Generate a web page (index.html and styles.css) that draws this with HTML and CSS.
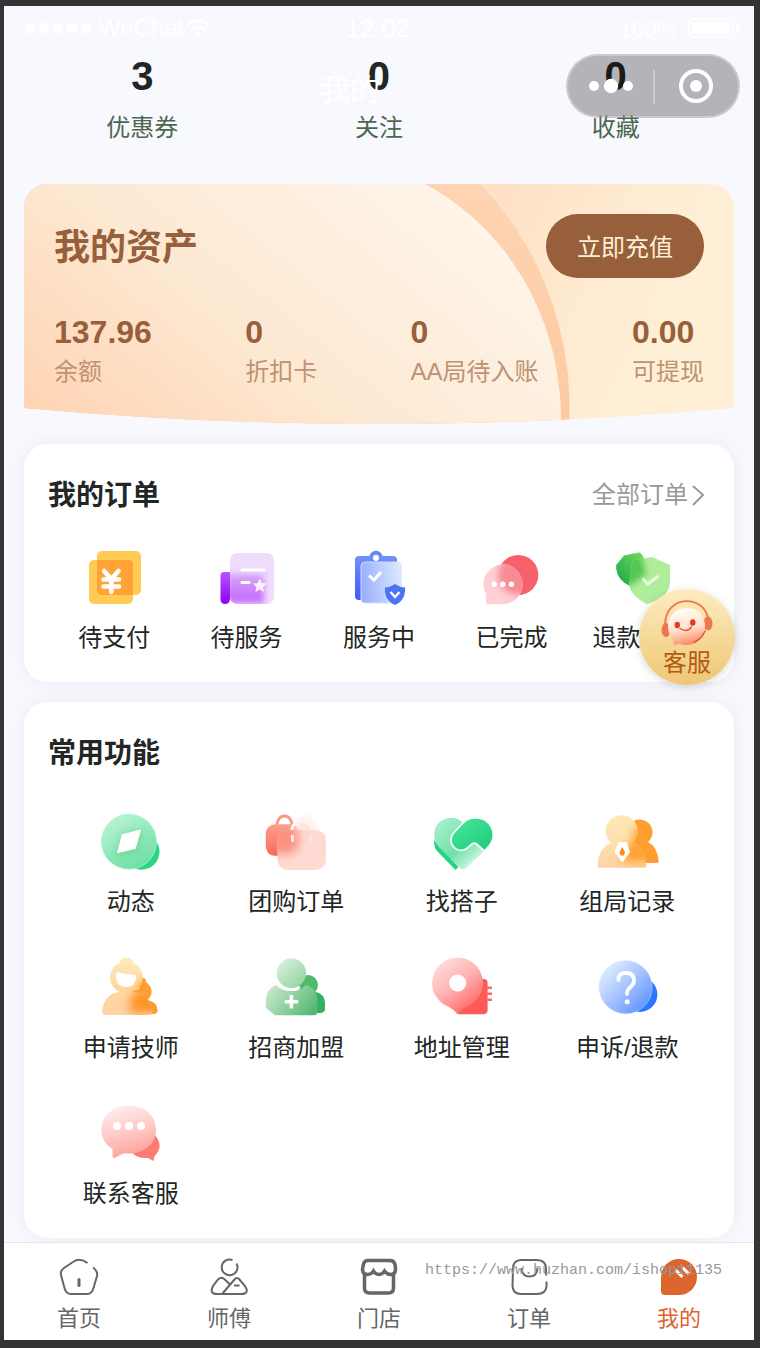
FILE: index.html
```html
<!DOCTYPE html>
<html lang="zh-CN">
<head>
    <meta charset="UTF-8">
    <meta name="viewport" content="width=device-width, initial-scale=1.0">
    <title>我的</title>
    <link rel="stylesheet" href="styles.css">
</head>
<body>

<div class="screen">

    <header class="topbar">
        <div class="status">
            <div class="status-left">
                <svg width="68" height="12" viewBox="0 0 68 12" fill="#fff"><circle cx="6" cy="6" r="5.6"/><circle cx="20" cy="6" r="5.6"/><circle cx="34" cy="6" r="5.6"/><circle cx="48" cy="6" r="5.6"/><circle cx="62" cy="6" r="5.6"/></svg>
                <span class="carrier">WeChat</span>
                <svg width="24" height="18" viewBox="0 0 24 18" fill="none" stroke="#fff" stroke-width="3"><path d="M1 6.5Q12-3 23 6.5M5 11Q12 5 19 11"/><path d="M8.5 14Q12 11 15.5 14L12 17.5Z" fill="#fff" stroke="none"/></svg>
            </div>
            <span class="time">12:02</span>
            <div class="status-right">
                <span class="percent">100%</span>
                <svg width="52" height="20" viewBox="0 0 52 20"><rect x="1" y="1" width="44" height="18" rx="4" fill="none" stroke="#fff" stroke-width="2"/><rect x="4" y="4" width="38" height="12" rx="2" fill="#fff"/><path d="M48 6Q52 6 52 10T48 14Z" fill="#fff"/></svg>
            </div>
        </div>
        <div class="nav">
            <h1 class="nav-title">我的</h1>
            <div class="capsule">
                <button type="button" aria-label="更多"><svg width="44" height="16" viewBox="0 0 44 16" fill="#fff"><circle cx="5" cy="8" r="5"/><circle cx="22" cy="8" r="7.2"/><circle cx="39" cy="8" r="5"/></svg></button>
                <button type="button" aria-label="关闭"><svg width="34" height="34" viewBox="0 0 34 34"><circle cx="17" cy="17" r="15" fill="none" stroke="#fff" stroke-width="4"/><circle cx="17" cy="17" r="6" fill="#fff"/></svg></button>
            </div>
        </div>
    </header>

    <main class="content">
        <div class="stats">
            <a href="#"><b>3</b><span>优惠券</span></a>
            <a href="#"><b>0</b><span>关注</span></a>
            <a href="#"><b>0</b><span>收藏</span></a>
        </div>

        <section class="assets">
            <svg class="assets-bg" viewBox="0 0 710 240" preserveAspectRatio="none">
                <defs>
                    <clipPath id="card"><path d="M0 24A24 24 0 0 1 24 0H686A24 24 0 0 1 710 24V224Q355 256 0 224Z"/></clipPath>
                    <linearGradient id="base" x1="0.68" y1="0" x2="1" y2="0.05"><stop offset="0" stop-color="#fee1c6"/><stop offset="0.5" stop-color="#feead0"/><stop offset="1" stop-color="#feefd6"/></linearGradient>
                    <linearGradient id="band" x1="0" y1="0" x2="0" y2="1"><stop offset="0" stop-color="#fed4b2"/><stop offset="1" stop-color="#fdcaa1"/></linearGradient>
                    <linearGradient id="disc" gradientUnits="userSpaceOnUse" x1="0" y1="240" x2="290" y2="-110"><stop offset="0" stop-color="#ffd2b2"/><stop offset="0.45" stop-color="#fde8d1"/><stop offset="1" stop-color="#fef5ea"/></linearGradient>
                </defs>
                <g clip-path="url(#card)">
                    <rect width="710" height="240" fill="url(#base)"/>
                    <path d="M0 0H456C515 60 550 150 545 240H0Z" fill="url(#band)"/>
                    <path d="M0 0H401C480 42 538 130 537 240H0Z" fill="url(#disc)"/>
                </g>
            </svg>
            <div class="assets-head">
                <h2>我的资产</h2>
                <button type="button" class="recharge">立即充值</button>
            </div>
            <div class="assets-list">
                <div><b>137.96</b><span>余额</span></div>
                <div><b>0</b><span>折扣卡</span></div>
                <div><b>0</b><span>AA局待入账</span></div>
                <div><b>0.00</b><span>可提现</span></div>
            </div>
        </section>

        <section class="panel">
            <div class="panel-head">
                <h2>我的订单</h2>
                <a class="more" href="#">全部订单<svg width="18" height="24" viewBox="0 0 18 24" fill="none" stroke="#999" stroke-width="2"><path d="M5 3L15 12L5 22"/></svg></a>
            </div>
            <div class="orders">
                <a class="entry" href="#">
                    <svg viewBox="0 0 60 60">
                        <rect x="5" y="12" width="44" height="44" rx="5" fill="#ffcb54"/>
                        <rect x="13" y="3" width="44" height="44" rx="5" fill="#ffcb54"/>
                        <path d="M13 12H44Q49 12 49 17V47H18Q13 47 13 42Z" fill="#ffa336"/>
                        <path d="M20 23L27.3 31L34.5 23M19.5 31.5H35M19.5 38.5H35M27.3 31V44" fill="none" stroke="#fff" stroke-width="4.6" stroke-linecap="round"/>
                    </svg>
                    <span>待支付</span>
                </a>
                <a class="entry" href="#">
                    <svg viewBox="0 0 60 60">
                        <defs>
                            <linearGradient id="o2a" x1="0" y1="0" x2="0" y2="1"><stop offset="0" stop-color="#b955ff"/><stop offset="1" stop-color="#8d00f5"/></linearGradient>
                            <linearGradient id="o2b" x1="0" y1="0" x2="0" y2="1"><stop offset="0" stop-color="#d9a5fc"/><stop offset="1" stop-color="#c065fb"/></linearGradient>
                            <clipPath id="o2c"><rect x="13" y="5" width="44" height="51" rx="7"/></clipPath>
                            <filter id="soft" x="-50%" y="-50%" width="200%" height="200%"><feGaussianBlur stdDeviation="3"/></filter>
                        </defs>
                        <path d="M13 24H7Q3.5 24 3.5 28V51Q3.5 56 8 56T13 51Z" fill="url(#o2a)"/>
                        <g clip-path="url(#o2c)">
                            <rect x="13" y="5" width="44" height="51" fill="#efdcfd"/>
                            <rect x="10" y="26" width="37" height="29" fill="url(#o2b)" filter="url(#soft)"/>
                        </g>
                        <path d="M25 22H47M25 34.5H32" stroke="#fff" stroke-width="3.2" stroke-linecap="round"/>
                        <path d="M42.7 30.5L44.8 35L49.5 35.6L46 39L47 44L42.7 41.5L38.4 44L39.3 39L36 35.6L40.7 35Z" fill="#fcf2ff"/>
                    </svg>
                    <span>待服务</span>
                </a>
                <a class="entry" href="#">
                    <svg viewBox="0 0 60 60">
                        <defs>
                            <linearGradient id="o3a" x1="0" y1="0" x2="0" y2="1"><stop offset="0" stop-color="#7191fb"/><stop offset="1" stop-color="#4655fc"/></linearGradient>
                            <linearGradient id="o3b" x1="0" y1="0.6" x2="1" y2="0.5"><stop offset="0" stop-color="#97aefe"/><stop offset="1" stop-color="#dce8ff"/></linearGradient>
                        </defs>
                        <circle cx="27" cy="9.5" r="4.7" fill="none" stroke="#6c87f3" stroke-width="4"/>
                        <rect x="6" y="8" width="42" height="44" rx="4" fill="url(#o3a)"/>
                        <circle cx="27" cy="10" r="3" fill="#fff"/>
                        <rect x="12" y="14" width="40" height="41" rx="4" fill="url(#o3b)" stroke="#d2dfff"/>
                        <path d="M20 27.5L25 32L32 24" fill="none" stroke="#fff" stroke-width="3"/>
                        <path d="M46 36Q51 39.5 56 39.5Q57 52 46 57Q35 52 36 39.5Q41 39.5 46 36Z" fill="#4c73f0"/>
                        <path d="M41.5 44L46 49L50.5 44" fill="none" stroke="#fff" stroke-width="2.4"/>
                    </svg>
                    <span>服务中</span>
                </a>
                <a class="entry" href="#">
                    <svg viewBox="0 0 60 60">
                        <defs><clipPath id="o4"><path d="M21.6 16.3A20 20 0 0 1 21.6 56.3H8Q5 56.3 5 53V46A20 20 0 0 1 21.6 16.3Z"/></clipPath></defs>
                        <circle cx="37.3" cy="27" r="20" fill="#f7616c"/>
                        <g clip-path="url(#o4)">
                            <rect width="60" height="60" fill="#fecfd5"/>
                            <circle cx="37" cy="27" r="20" fill="#f98b96" filter="url(#soft)"/>
                        </g>
                        <g fill="#fff"><circle cx="13.2" cy="36.3" r="2.7"/><circle cx="21.8" cy="36.3" r="2.7"/><circle cx="30.4" cy="36.3" r="2.7"/></g>
                    </svg>
                    <span>已完成</span>
                </a>
                <a class="entry" href="#">
                    <svg viewBox="0 0 60 60">
                        <defs>
                            <linearGradient id="o5a" x1="1" y1="0" x2="0" y2="1"><stop offset="0" stop-color="#78df57"/><stop offset="1" stop-color="#15a44c"/></linearGradient>
                            <clipPath id="o5"><path d="M18.5 12.5L37.8 9L56 17V34Q56 49 32.8 56.3Q13 45 15.5 33Z"/></clipPath>
                        </defs>
                        <path d="M2.2 17L10 7.5L24.5 4.5Q27 4 29.5 9.5L32 30L16 38Q4 33 2.2 21Z" fill="url(#o5a)"/>
                        <g clip-path="url(#o5)">
                            <rect width="60" height="60" fill="#b0ed9b"/>
                            <path d="M8 5H27L32 26L16 38L6 33Z" fill="#54c651" filter="url(#soft)"/>
                        </g>
                        <path d="M29 30.5L33.7 36L44.5 28" fill="none" stroke="#e7fbdc" stroke-width="3"/>
                    </svg>
                    <span>退款/售后</span>
                </a>
            </div>
        </section>

        <section class="panel">
            <div class="panel-head">
                <h2>常用功能</h2>
            </div>
            <div class="tools">
                <a class="entry" href="#">
                    <svg viewBox="0 0 64 64">
                        <defs>
                            <linearGradient id="t1a" x1="0.2" y1="0" x2="0.8" y2="1"><stop offset="0" stop-color="#bcf4d6"/><stop offset="1" stop-color="#68dea0"/></linearGradient>
                            <clipPath id="t1"><circle cx="30" cy="31.7" r="27.5"/></clipPath>
                        </defs>
                        <circle cx="42.5" cy="41.7" r="18" fill="#25d683"/>
                        <circle cx="30" cy="31.7" r="27.5" fill="url(#t1a)" stroke="#b4efcf" stroke-width="0.8"/>
                        <path d="M23 24L44 19L38 42L16 47Z" fill="#51cf83" opacity="0.55" filter="url(#soft)" clip-path="url(#t1)"/>
                        <path d="M22.9 24.3L42.3 19.3L36.6 39L17.9 43.3Z" fill="#fff"/>
                    </svg>
                    <span>动态</span>
                </a>
                <a class="entry" href="#">
                    <svg viewBox="0 0 64 64">
                        <defs>
                            <linearGradient id="t2a" x1="0" y1="0" x2="0" y2="1"><stop offset="0" stop-color="#fda08c"/><stop offset="1" stop-color="#f66b59"/></linearGradient>
                            <clipPath id="t2"><rect x="13.5" y="20" width="48.5" height="40" rx="10"/></clipPath>
                        </defs>
                        <path d="M13 15A7.5 9 0 0 1 28 15" fill="none" stroke="#f99a86" stroke-width="3"/>
                        <rect x="1.8" y="14.3" width="34" height="31.5" rx="9" fill="url(#t2a)"/>
                        <circle cx="41" cy="18" r="10" fill="#ffe3dd" filter="url(#soft)"/>
                        <path d="M27.5 21Q29 11 38 11T48.5 21" fill="none" stroke="#fff2ef" stroke-width="3"/>
                        <g clip-path="url(#t2)">
                            <rect width="64" height="64" fill="#ffdad2"/>
                            <rect x="0" y="13" width="34" height="31" rx="9" fill="#fc9180" filter="url(#softer)"/>
                        </g>
                        <path d="M28.5 26V30.5M47 26V30.5" stroke="#ffe6e0" stroke-width="3" stroke-linecap="round"/>
                    </svg>
                    <span>团购订单</span>
                </a>
                <a class="entry" href="#">
                    <svg viewBox="0 0 64 64">
                        <defs>
                            <linearGradient id="t3a" gradientUnits="userSpaceOnUse" x1="10" y1="8" x2="50" y2="52"><stop offset="0" stop-color="#a8f2ce"/><stop offset="0.6" stop-color="#6fe0a9"/><stop offset="1" stop-color="#dcfaea"/></linearGradient>
                            <linearGradient id="t3b" x1="0" y1="0" x2="1" y2="1"><stop offset="0" stop-color="#4be79d"/><stop offset="1" stop-color="#1ccb78"/></linearGradient>
                            <filter id="softer" x="-60%" y="-60%" width="220%" height="220%"><feGaussianBlur stdDeviation="5"/></filter>
                        </defs>
                        <path d="M4.2 30L28.5 57L25.5 60L7 41Q3.500 37 4.2 30Z" fill="#27d482"/>
                        <path d="M33 13Q27 6.5 18 8Q4 11 4.2 26Q4.5 32 9 37L30.500 58.500Q33 60.500 35.500 58.500L54.500 41L44 32L33 41L22 30Z" fill="url(#t3a)"/>
                        <path d="M33.500 12.500C40 6 53 6 59.500 14C65 22 64 30 59 36L54.500 41L46.500 34Q44 32 41.500 34.300L38.500 37.200Q34 41.500 28 40C20 37 19 28 24 22.500Z" fill="url(#t3b)" stroke="#f2fff8" stroke-width="1.8"/>
                    </svg>
                    <span>找搭子</span>
                </a>
                <a class="entry" href="#">
                    <svg viewBox="0 0 64 64">
                        <defs>
                            <linearGradient id="t4a" x1="0" y1="0" x2="0" y2="1"><stop offset="0" stop-color="#ffeab9"/><stop offset="0.5" stop-color="#fee0b0"/><stop offset="1" stop-color="#ffd0a0"/></linearGradient>
                            <clipPath id="t4"><path d="M16 33A16 16 0 1 1 38 32.5Q50 38 51.4 56Q51.4 57.7 49.5 57.7H4.5Q2.7 57.7 2.7 56Q3 38 16 33Z"/></clipPath>
                        </defs>
                        <path d="M53 32A12.7 12.7 0 1 0 33 27V53H62Q63.8 53 63.7 51Q62 36 53 32Z" fill="#ff9e2f"/>
                        <g clip-path="url(#t4)">
                            <rect width="64" height="64" fill="url(#t4a)"/>
                            <path d="M38 18H64V52H27V38L39 32Z" fill="#ffa032" filter="url(#softer)"/>
                        </g>
                        <path d="M24 33H31L34 42L27.3 51L20.500 42Z" fill="#fff" stroke="#fff" stroke-width="2" stroke-linejoin="round"/>
                        <path d="M27.2 37L30 42L29 45.500H25.500L24.5 42Z" fill="#ff8a1f"/>
                    </svg>
                    <span>组局记录</span>
                </a>
                <a class="entry" href="#">
                    <svg viewBox="0 0 64 64">
                        <defs>
                            <linearGradient id="t5a" x1="0" y1="0" x2="0" y2="1"><stop offset="0" stop-color="#ffecbf"/><stop offset="0.5" stop-color="#fed7a0"/><stop offset="1" stop-color="#ffd1a6"/></linearGradient>
                            <clipPath id="t5"><path d="M21 6.500A6.500 5 0 1 1 34 6.500A16 16 0 0 1 34 36Q50 37 53 55Q53.5 59 50 59H6.5Q2.8 59 3.2 55Q5 38 20.500 36A16 16 0 0 1 21 6.500Z"/></clipPath>
                        </defs>
                        <path d="M42 22Q47 21 47 26Q57 34 49 44Q58 46 58.6 54Q58.6 58 55 58H28V36L40 33Z" fill="#ff9e30"/>
                        <g clip-path="url(#t5)">
                            <rect width="64" height="64" fill="url(#t5a)"/>
                            <path d="M42 25H60V57H31V41L42 34Z" fill="#ff9426" filter="url(#softer)"/>
                        </g>
                        <path d="M18 16Q28 19 37 19Q37.5 31 27.3 31T17 20Q17 17 18 16Z" fill="#fff"/>
                    </svg>
                    <span>申请技师</span>
                </a>
                <a class="entry" href="#">
                    <svg viewBox="0 0 64 64">
                        <defs>
                            <linearGradient id="t6a" x1="0" y1="0" x2="1" y2="1"><stop offset="0" stop-color="#e0f3e2"/><stop offset="1" stop-color="#8dcf9c"/></linearGradient>
                            <linearGradient id="t6b" x1="0" y1="0.2" x2="1" y2="0.7"><stop offset="0" stop-color="#cde9d0"/><stop offset="1" stop-color="#54b972"/></linearGradient>
                        </defs>
                        <circle cx="44" cy="29" r="10" fill="#4ebb6b"/>
                        <path d="M38 36H52Q60 38 61 46V54Q60 57 56 57H38Z" fill="#32b164"/>
                        <path d="M12 29Q18 35 27.5 35T42 29Q53 32 53.4 43V56Q53.4 59.3 50 59.3H11L1.8 52V43Q3 32 12 29Z" fill="url(#t6b)"/>
                        <path d="M16 30Q26 37 36 31" fill="none" stroke="#fff" stroke-width="2.5"/>
                        <circle cx="27.4" cy="17.3" r="14.7" fill="url(#t6a)"/>
                        <path d="M27.4 39V52.5M20.7 45.7H34.2" stroke="#fff" stroke-width="3.6"/>
                    </svg>
                    <span>招商加盟</span>
                </a>
                <a class="entry" href="#">
                    <svg viewBox="0 0 64 64">
                        <defs>
                            <linearGradient id="t7a" x1="0.2" y1="0" x2="0.8" y2="0.9"><stop offset="0" stop-color="#ffdfdd"/><stop offset="0.5" stop-color="#ffb3b1"/><stop offset="1" stop-color="#ff6967"/></linearGradient>
                        </defs>
                        <path d="M36 23H54Q57.6 23 57.6 27V54Q57.6 58.3 53 58.3H28Z" fill="#ff5a5a"/>
                        <path d="M57 31.7H62M57 37.7H62M57 43.7H62" stroke="#ff6a68" stroke-width="2.5"/>
                        <path d="M27.6 1.5A25.5 25.5 0 0 1 36 51Q33 53 27.6 58.3Q23 53 19 51A25.5 25.5 0 0 1 27.6 1.5Z" fill="url(#t7a)"/>
                        <circle cx="27.6" cy="27" r="8.6" fill="#fff"/>
                    </svg>
                    <span>地址管理</span>
                </a>
                <a class="entry" href="#">
                    <svg viewBox="0 0 64 64">
                        <defs>
                            <linearGradient id="t8a" x1="0.1" y1="0.1" x2="0.85" y2="0.85"><stop offset="0" stop-color="#e3eeff"/><stop offset="0.5" stop-color="#a9c6ff"/><stop offset="1" stop-color="#6798ff"/></linearGradient>
                        </defs>
                        <circle cx="45" cy="38.5" r="17.4" fill="#2e76fc"/>
                        <circle cx="30.7" cy="31.3" r="26.5" fill="url(#t8a)" stroke="#c4d9ff" stroke-width="0.5"/>
                        <path d="M23.5 24Q23 17 31 17T39 24.5Q39 28 35.5 31T32 37V38" fill="none" stroke="#fff" stroke-width="3.8" stroke-linecap="round"/>
                        <circle cx="32.2" cy="45.8" r="2.5" fill="#fff"/>
                    </svg>
                    <span>申诉/退款</span>
                </a>
                <a class="entry" href="#">
                    <svg viewBox="0 0 64 64">
                        <defs>
                            <linearGradient id="t9a" x1="0.4" y1="0" x2="0.7" y2="1"><stop offset="0" stop-color="#ffebea"/><stop offset="0.5" stop-color="#ffc8c5"/><stop offset="1" stop-color="#ff9a94"/></linearGradient>
                        </defs>
                        <path d="M55 32Q66 44 55.5 54L54.5 59L49 56Q37 57 32 49Z" fill="#fc7b73"/>
                        <path d="M29.6 3.5C46 3.5 57 14 57 28S45 51.5 30 51.5H24L15.5 56Q13.5 56 13.5 54V47Q2.5 41 2.3 28C2.3 14 14 3.5 29.6 3.5Z" fill="url(#t9a)"/>
                        <g fill="#fff"><circle cx="18" cy="24" r="4"/><circle cx="30" cy="24" r="4"/><circle cx="42" cy="24" r="4"/></g>
                    </svg>
                    <span>联系客服</span>
                </a>
            </div>
        </section>
    </main>

    <nav class="tabbar">
        <a href="#">
            <svg viewBox="0 0 40 40"><path d="M28.5 6Q21 0 14 5L5 11Q1 14 2 18L5.5 31Q7 37 12 37H28Q33 37 34.5 31L38 19Q39 14 34 10.5"/><path d="M20 22.5V28.5" stroke-width="3" stroke-linecap="round"/></svg>
            <span>首页</span>
        </a>
        <a href="#">
            <svg viewBox="0 0 40 40"><path d="M23.5 3A7.9 7.9 0 1 0 27.5 6.5"/><path d="M20.5 27L15 21.8Q12 19.5 9 22.5L4 29Q0 37 8 37H32Q41 37 36 29L30.5 22.5Q28 19.5 25.5 22.5L13.5 36.5M25 28.5H30.5"/></svg>
            <span>师傅</span>
        </a>
        <a href="#">
            <svg class="bold" viewBox="0 0 40 40"><path d="M9 3.5H31Q35 3.5 36 7.5L36.5 12Q36.5 17.5 31.5 17.5Q28 17.5 25.5 14Q23.500 17.5 20 17.5T14.5 14Q12.500 17.5 8.5 17.5Q3.5 17.5 3.5 12L4.5 7.5Q5 3.5 9 3.5ZM5.5 17V31Q5.5 36 10.5 36H29.5Q34.5 36 34.5 31V17"/></svg>
            <span>门店</span>
        </a>
        <a href="#">
            <svg viewBox="0 0 40 40"><path d="M37 18.500V12Q37 3 28 3H12Q4 3 4 12L3.500 29Q4 37 12 37H28Q37 37 37.500 29V24.500M12.5 11Q13 19.5 20.5 19.5T28.5 11"/></svg>
            <span>订单</span>
        </a>
        <a class="active" href="#">
            <svg viewBox="0 0 40 40"><path d="M20 2A18 18 0 0 1 20 38H6Q2 38 2 34V20A18 18 0 0 1 20 2Z" fill="#dd652e" stroke="none"/><path d="M16.5 13L23.5 20M23.5 10.5L30 17" stroke="#fff" stroke-width="3"/></svg>
            <span>我的</span>
        </a>
        <span class="site-url">https://www.huzhan.com/ishop11135</span>
    </nav>

    <button type="button" class="service">
        <svg viewBox="0 0 56 48">
            <defs><linearGradient id="face" x1="0.4" y1="0.1" x2="0.6" y2="1"><stop offset="0" stop-color="#fffaf2"/><stop offset="0.5" stop-color="#ffe1cc"/><stop offset="1" stop-color="#f9835e"/></linearGradient></defs>
            <path d="M6 25C7-4 44-5 49 19" fill="none" stroke="#ee7650" stroke-width="1.8"/>
            <ellipse cx="7" cy="31" rx="4.5" ry="7" fill="#ef7654"/>
            <ellipse cx="49" cy="24.5" rx="4.5" ry="7" fill="#ef7654"/>
            <path d="M28 9C39 9 46 17 46 27S39 46 28 46Q24 46 20 44.500L15 46.500L14 41Q9 35 9 27C9 17 17 9 28 9Z" fill="url(#face)"/>
            <ellipse cx="18.3" cy="26" rx="2.7" ry="3.3" fill="#e43b1c"/><ellipse cx="33.8" cy="23.5" rx="2.7" ry="3.3" fill="#e43b1c"/>
            <path d="M21 29.5Q28 34 32.500 28M35 43Q43 40 46 32" fill="none" stroke="#e5533a" stroke-width="1.4" stroke-linecap="round"/>
        </svg>
        <span>客服</span>
    </button>
</div>

</body>
</html>
```
FILE: styles.css
```css
* {
    box-sizing: border-box;
}
body {
    margin: 0;
    padding: 6px 6px 8px 4px;
    background-color: #343434;
    color: #222624;
    font-family: "Liberation Sans", "Noto Sans CJK SC", sans-serif;
    font-size: 24px;
    line-height: 32px;
}
h1, h2 {
    margin: 0;
}
a {
    color: inherit;
    text-decoration: none;
}
button {
    border: none;
    padding: 0;
    background: none;
    font: inherit;
    color: inherit;
    cursor: pointer;
}
svg {
    display: block;
}
.screen {
    position: relative;
    display: flex;
    flex-direction: column;
    min-height: calc(100vh - 14px);
    background-color: #f8f9ff;
}

/* top bar, lies over the scrolled content */
.topbar {
    position: absolute;
    top: 0;
    left: 0;
    right: 0;
    z-index: 2;
    padding-right: 14px;
    color: #fff;
}
.status {
    display: grid;
    grid-template-columns: 1fr auto 1fr;
    align-items: center;
    height: 44px;
    padding-left: 12px;
}
.status-left, .status-right {
    display: flex;
    align-items: center;
    gap: 6px;
}
.status-left {
    padding-left: 8px;
}
.status-left svg:last-child {
    margin-left: -4px;
}
.status-right {
    justify-content: flex-end;
    gap: 12px;
}
.time {
    font-size: 26px;
}
.percent {
    padding-top: 4px;
    font-size: 22px;
}
.nav {
    display: flex;
    align-items: center;
    height: 72px;
    padding-left: 130px;
}
.nav-title {
    flex: 1;
    padding-top: 8px;
    font-size: 30px;
    font-weight: 400;
    text-align: center;
}
.capsule {
    display: flex;
    width: 174px;
    height: 64px;
    border: 2px solid rgba(255, 255, 255, 0.3);
    border-radius: 32px;
    background-color: rgba(0, 0, 0, 0.28);
}
.capsule button {
    flex: 1;
    display: flex;
    align-items: center;
    justify-content: center;
    position: relative;
}
.capsule button + button::before {
    content: "";
    position: absolute;
    left: 0;
    top: 14px;
    bottom: 12px;
    width: 2px;
    background-color: rgba(255, 255, 255, 0.35);
}

.content {
    padding: 46px 20px 4px;
    display: flex;
    flex-direction: column;
    gap: 20px;
}
.stats {
    display: grid;
    grid-template-columns: repeat(3, 1fr);
    margin-bottom: 20px;
}
.stats a {
    display: flex;
    flex-direction: column;
    align-items: center;
    gap: 12px;
    color: #4d6650;
}
.stats b {
    font-size: 40px;
    line-height: 48px;
    color: #222624;
}

/* assets */
.assets {
    position: relative;
    padding: 30px 30px 36px;
    color: #985f3c;
}
.assets-bg {
    position: absolute;
    top: 0;
    left: 0;
    width: 100%;
    height: 100%;
}
.assets-head, .assets-list {
    position: relative;
    display: flex;
    justify-content: space-between;
    align-items: center;
}
.assets-head {
    margin-bottom: 34px;
}
.assets-head h2 {
    padding-top: 4px;
    font-size: 36px;
    line-height: 60px;
}
.recharge {
    height: 64px;
    padding: 4px 31px 0;
    border-radius: 32px;
    background-color: #985f3c;
    color: #feefd5;
}
.assets-list div {
    display: flex;
    flex-direction: column;
    gap: 4px;
}
.assets-list b {
    font-size: 32px;
    line-height: 40px;
}
.assets-list span {
    color: #bd9373;
}

/* white panels */
.panel {
    padding: 32px 24px 28px;
    border-radius: 24px;
    background-color: #fff;
    box-shadow: 0 0 20px rgba(0, 0, 0, 0.06);
}
.panel-head {
    display: flex;
    justify-content: space-between;
    align-items: center;
    margin-bottom: 32px;
}
.panel-head h2 {
    font-size: 28px;
    line-height: 40px;
}
.more {
    display: flex;
    align-items: center;
    padding-right: 4px;
    padding-bottom: 2px;
    color: #999;
}
.orders {
    display: grid;
    grid-template-columns: repeat(5, 1fr);
}
.tools {
    display: grid;
    grid-template-columns: repeat(4, 1fr);
    row-gap: 36px;
    padding-top: 4px;
}
.entry {
    display: flex;
    flex-direction: column;
    align-items: center;
    gap: 14px;
    white-space: nowrap;
}
.entry svg {
    width: 60px;
    height: 60px;
}
.tools .entry {
    gap: 12px;
}
.tools .entry svg {
    width: 64px;
    height: 64px;
}
.tools .entry {
    padding-bottom: 2px;
}
.tools {
    margin-bottom: -2px;
}

/* bottom tabs */
.tabbar {
    position: relative;
    display: flex;
    margin-top: auto;
    padding: 14px 0 7px;
    border-top: 1px solid #e6e6e8;
    background-color: #fff;
}
.tabbar a {
    flex: 1;
    display: flex;
    flex-direction: column;
    align-items: center;
    gap: 8px;
    color: #666;
    font-size: 22px;
    line-height: 28px;
}
.tabbar svg {
    width: 40px;
    height: 40px;
    fill: none;
    stroke: #666;
    stroke-width: 2;
}
.tabbar svg.bold {
    stroke-width: 3.5;
}
.tabbar .active {
    color: #dd652e;
}
.site-url {
    position: absolute;
    top: 18px;
    right: 32px;
    color: #999;
    font-family: "Liberation Mono", monospace;
    font-size: 15px;
    line-height: 20px;
}

/* floating customer service button */
.service {
    position: absolute;
    top: 583px;
    right: 19px;
    z-index: 1;
    display: flex;
    flex-direction: column;
    align-items: center;
    width: 96px;
    height: 96px;
    padding-top: 10px;
    border-radius: 50%;
    background: linear-gradient(#fdecc0, #eec774);
    box-shadow: 0 2px 8px rgba(0, 0, 0, 0.15);
    color: #b45a16;
}
.service svg {
    width: 56px;
    height: 48px;
}
```
